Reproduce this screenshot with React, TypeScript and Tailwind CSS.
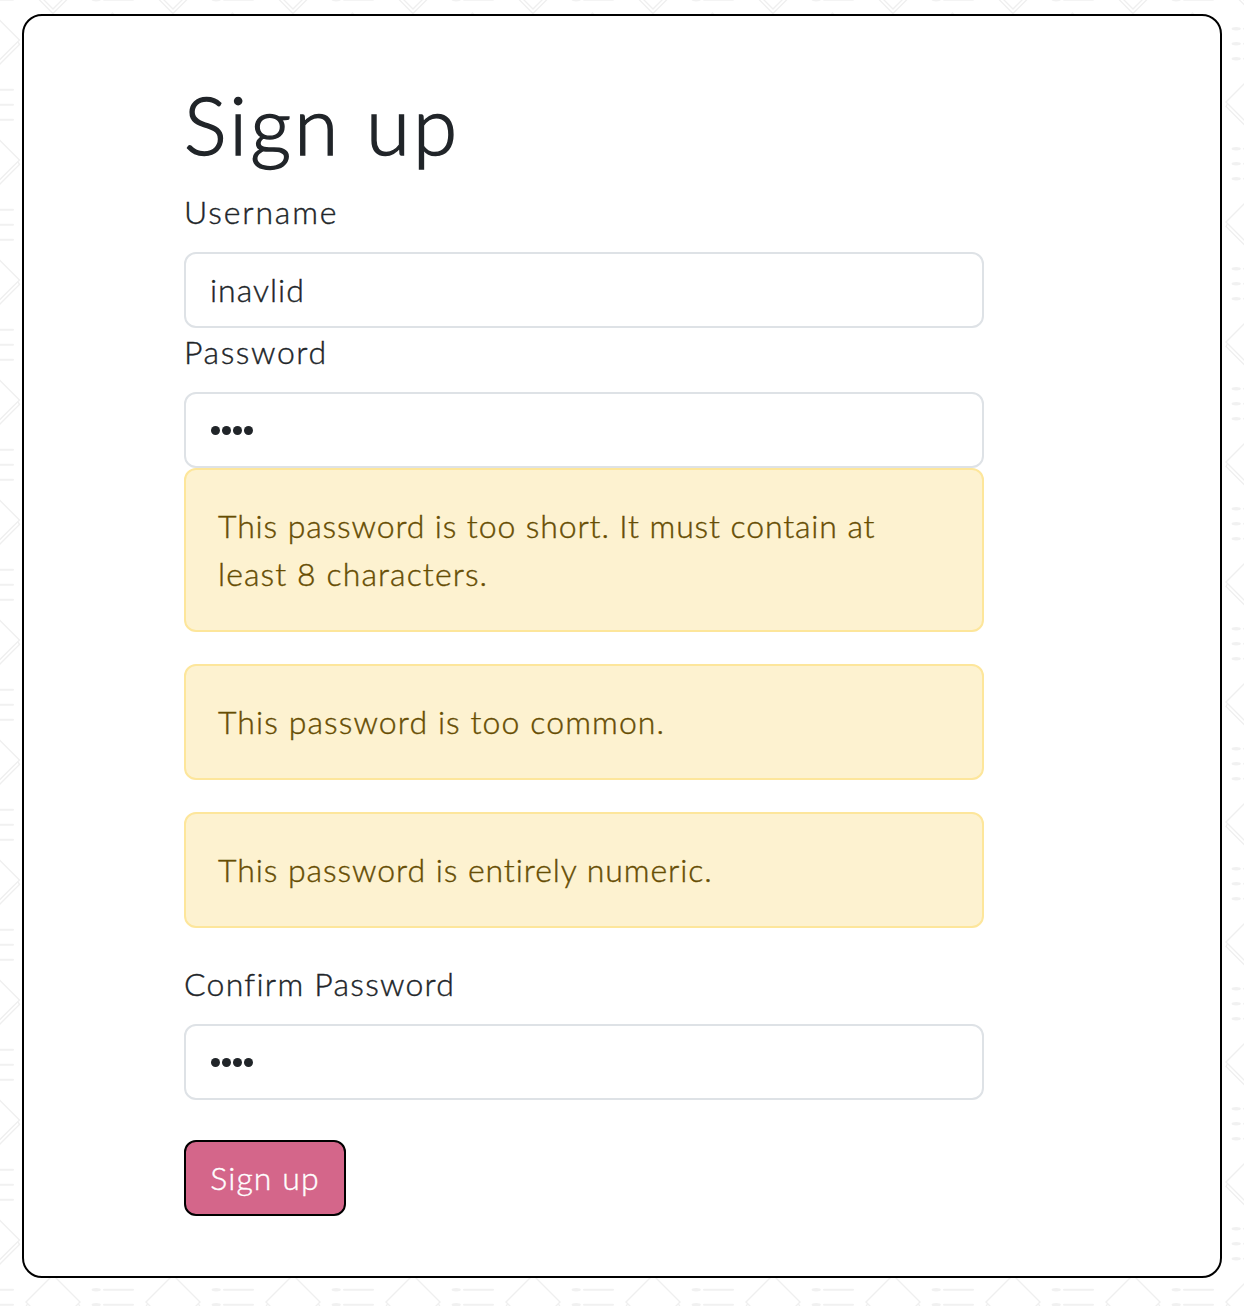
import React from 'react';

function Backdrop() {
  return (
    <svg className="absolute inset-0 h-full w-full" aria-hidden="true">
      <defs>
        <g id="diamond" fill="none" stroke="#efefef" strokeWidth="1.4">
          <path d="M-27 0L0 -27L27 0L0 27Z" />
          <path d="M-25.5 2L-27 4.5L0 31.5L27 4.5L25.5 2" />
        </g>
        <g id="list" fill="#f1f1f1">
          <ellipse cx="4.2" cy="0" rx="4.6" ry="1.7" />
          <rect x="11" y="-1" width="31" height="2" rx="1" />
          <ellipse cx="4.2" cy="15" rx="4.6" ry="1.7" />
          <rect x="11" y="14" width="31" height="2" rx="1" />
          <ellipse cx="4.2" cy="30" rx="4.6" ry="1.7" />
          <rect x="11" y="29" width="31" height="2" rx="1" />
        </g>
        <pattern id="tile" width="120" height="120" patternUnits="userSpaceOnUse">
          <use href="#diamond" x="53" y="102" />
          <use href="#diamond" x="53" y="-18" />
          <use href="#diamond" x="112.5" y="40" />
          <use href="#diamond" x="-7.5" y="40" />
          <use href="#list" x="32" y="28.7" />
          <use href="#list" x="92" y="89.7" />
          <use href="#list" x="-28" y="89.7" />
          <use href="#list" x="92" y="-30.3" />
          <use href="#list" x="-28" y="-30.3" />
        </pattern>
      </defs>
      <rect width="100%" height="100%" fill="url(#tile)" />
    </svg>
  );
}

function Label({ htmlFor, className, children }: { htmlFor: string; className: string; children: React.ReactNode }) {
  return (
    <label htmlFor={htmlFor} className="mb-4 block h-12 whitespace-nowrap leading-[48px]">
      <span className={className}>{children}</span>
    </label>
  );
}

function PasswordField({ id }: { id: string }) {
  return (
    <div id={id} className="flex h-[76px] items-center gap-[2.2px] rounded-xl border-2 border-[#dee2e6] bg-white px-[25px] pt-[1.5px]">
      {[0, 1, 2, 3].map((i) => (
        <span key={i} className="size-[8.8px] rounded-full bg-[#212529]" />
      ))}
    </div>
  );
}

function Alert({ children }: { children: React.ReactNode }) {
  return (
    <div className="mb-8 rounded-xl border-2 border-[#fde69b] bg-[#fdf2d0] px-8 py-8 leading-[48px] text-[#664d03]">
      {children}
    </div>
  );
}

function Line({ className, children }: { className: string; children: React.ReactNode }) {
  return (
    <div className="h-12 whitespace-nowrap leading-[48px]">
      <span className={className}>{children}</span>
    </div>
  );
}

export default function App() {
  return (
    <div className="relative h-[1306px] w-[1244px] overflow-hidden bg-white px-[22px] pt-[14px] font-['Lato',sans-serif] text-[32px] font-light text-[#212529] [-webkit-text-stroke-width:0.4px]">
      <Backdrop />
      <main className="relative h-[1264px] w-[1200px] rounded-[20px] border-2 border-black bg-white px-[160px] pt-[60px]">
        <form className="w-[800px]" onSubmit={(e) => e.preventDefault()}>
          <h1 className="mb-4 h-24 whitespace-nowrap text-[80px] leading-[96px] [-webkit-text-stroke-width:1.5px]">
            <span className="tracking-[3.1px]">Sign up</span>
          </h1>
          <Label htmlFor="username" className="tracking-[1.85px]">Username</Label>
          <input
            id="username"
            defaultValue="inavlid"
            className="block h-[76px] w-full rounded-xl border-2 border-[#dee2e6] bg-white px-6 pb-[2px] tracking-[1px] outline-none"
          />
          <Label htmlFor="password1" className="tracking-[1.6px]">Password</Label>
          <PasswordField id="password1" />
          <Alert>
            <Line className="tracking-[0.88px]">This password is too short. It must contain at</Line>
            <Line className="tracking-[1.1px]">least 8 characters.</Line>
          </Alert>
          <Alert>
            <Line className="tracking-[1.1px]">This password is too common.</Line>
          </Alert>
          <Alert>
            <Line className="tracking-[0.94px]">This password is entirely numeric.</Line>
          </Alert>
          <Label htmlFor="password2" className="tracking-[1.25px]">Confirm Password</Label>
          <PasswordField id="password2" />
          <button className="mt-10 flex h-[76px] w-[162px] items-center justify-center whitespace-nowrap rounded-xl border-2 border-black bg-[#d4668a] tracking-[1.1px] text-white">
            Sign up
          </button>
        </form>
      </main>
    </div>
  );
}
